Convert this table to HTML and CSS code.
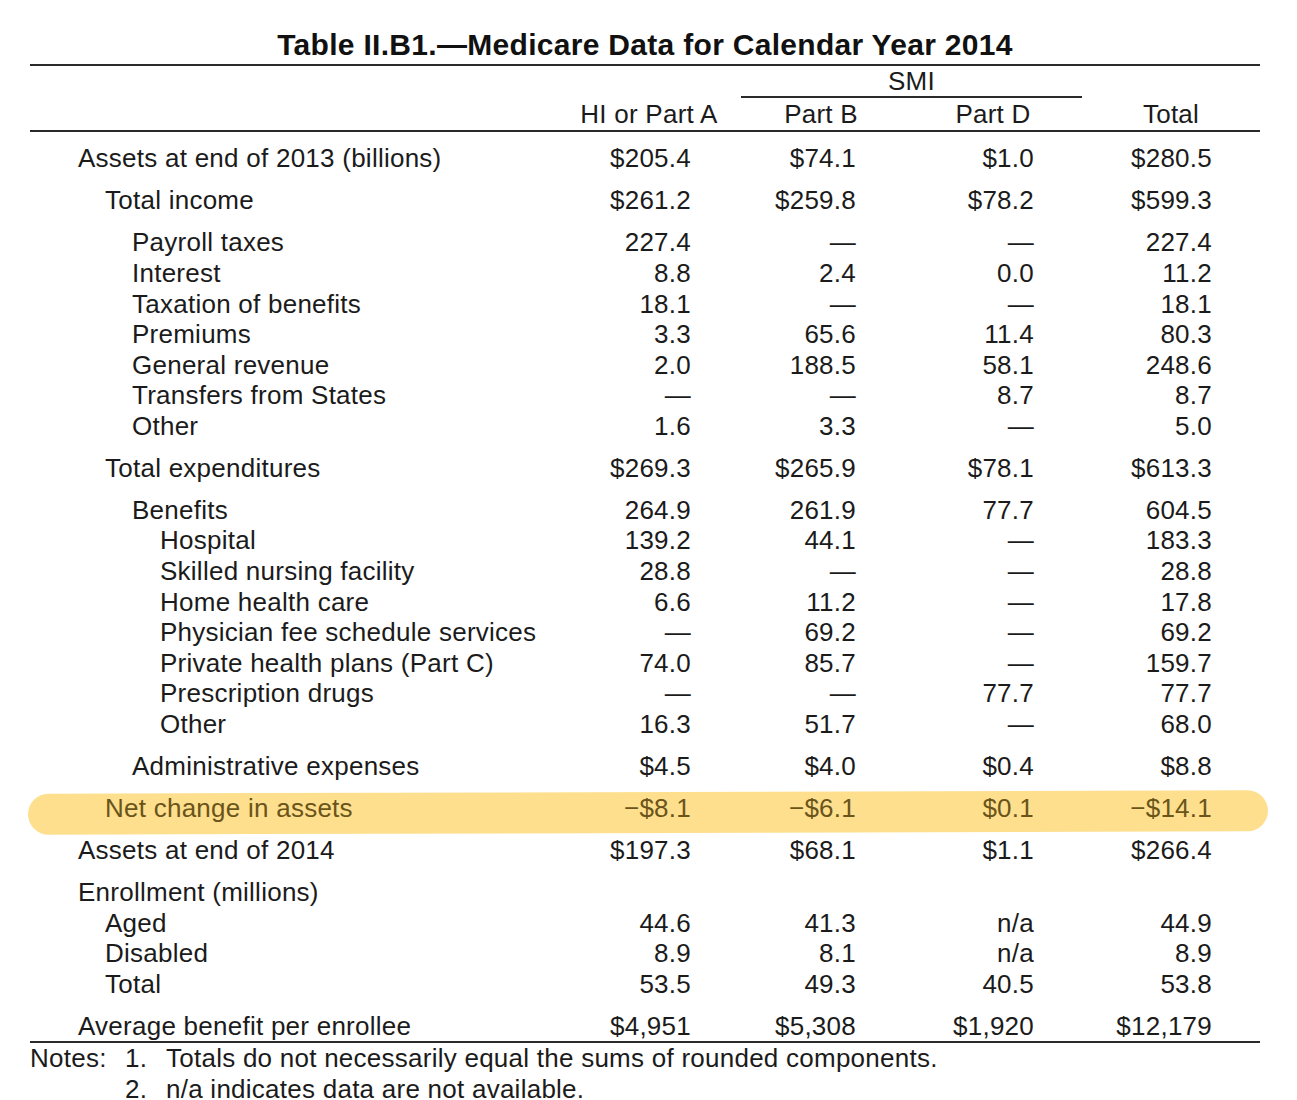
FILE: index.html
```html
<!DOCTYPE html>
<html lang="en">
<head>
<meta charset="utf-8">
<title>Table II.B1 — Medicare Data for Calendar Year 2014</title>
<link rel="stylesheet" href="styles.css">
</head>
<body>
<div class="page">
  <h1 class="title">Table II.B1.—Medicare Data for Calendar Year 2014</h1>
  <table class="data">
    <colgroup>
      <col class="w-label"><col class="w-hi"><col class="w-b"><col class="w-d"><col class="w-t">
    </colgroup>
    <thead>
      <tr class="smi-row">
        <th></th><th></th>
        <th colspan="2"><div class="smi">SMI</div></th>
        <th></th>
      </tr>
      <tr class="col-heads">
        <th></th>
        <th class="h-hi">HI or Part A</th>
        <th class="h-b">Part B</th>
        <th class="h-d">Part D</th>
        <th class="h-t">Total</th>
      </tr>
    </thead>
    <tbody>
      <tr class="gap"><td class="l0">Assets at end of 2013 (billions)</td><td class="n hi">$205.4</td><td class="n b">$74.1</td><td class="n d">$1.0</td><td class="n t">$280.5</td></tr>
      <tr class="gap"><td class="l1">Total income</td><td class="n hi">$261.2</td><td class="n b">$259.8</td><td class="n d">$78.2</td><td class="n t">$599.3</td></tr>
      <tr class="gap"><td class="l2">Payroll taxes</td><td class="n hi">227.4</td><td class="n b">—</td><td class="n d">—</td><td class="n t">227.4</td></tr>
      <tr><td class="l2">Interest</td><td class="n hi">8.8</td><td class="n b">2.4</td><td class="n d">0.0</td><td class="n t">11.2</td></tr>
      <tr><td class="l2">Taxation of benefits</td><td class="n hi">18.1</td><td class="n b">—</td><td class="n d">—</td><td class="n t">18.1</td></tr>
      <tr><td class="l2">Premiums</td><td class="n hi">3.3</td><td class="n b">65.6</td><td class="n d">11.4</td><td class="n t">80.3</td></tr>
      <tr><td class="l2">General revenue</td><td class="n hi">2.0</td><td class="n b">188.5</td><td class="n d">58.1</td><td class="n t">248.6</td></tr>
      <tr><td class="l2">Transfers from States</td><td class="n hi">—</td><td class="n b">—</td><td class="n d">8.7</td><td class="n t">8.7</td></tr>
      <tr><td class="l2">Other</td><td class="n hi">1.6</td><td class="n b">3.3</td><td class="n d">—</td><td class="n t">5.0</td></tr>
      <tr class="gap"><td class="l1">Total expenditures</td><td class="n hi">$269.3</td><td class="n b">$265.9</td><td class="n d">$78.1</td><td class="n t">$613.3</td></tr>
      <tr class="gap"><td class="l2">Benefits</td><td class="n hi">264.9</td><td class="n b">261.9</td><td class="n d">77.7</td><td class="n t">604.5</td></tr>
      <tr><td class="l3">Hospital</td><td class="n hi">139.2</td><td class="n b">44.1</td><td class="n d">—</td><td class="n t">183.3</td></tr>
      <tr><td class="l3">Skilled nursing facility</td><td class="n hi">28.8</td><td class="n b">—</td><td class="n d">—</td><td class="n t">28.8</td></tr>
      <tr><td class="l3">Home health care</td><td class="n hi">6.6</td><td class="n b">11.2</td><td class="n d">—</td><td class="n t">17.8</td></tr>
      <tr><td class="l3">Physician fee schedule services</td><td class="n hi">—</td><td class="n b">69.2</td><td class="n d">—</td><td class="n t">69.2</td></tr>
      <tr><td class="l3">Private health plans (Part C)</td><td class="n hi">74.0</td><td class="n b">85.7</td><td class="n d">—</td><td class="n t">159.7</td></tr>
      <tr><td class="l3">Prescription drugs</td><td class="n hi">—</td><td class="n b">—</td><td class="n d">77.7</td><td class="n t">77.7</td></tr>
      <tr><td class="l3">Other</td><td class="n hi">16.3</td><td class="n b">51.7</td><td class="n d">—</td><td class="n t">68.0</td></tr>
      <tr class="gap"><td class="l2">Administrative expenses</td><td class="n hi">$4.5</td><td class="n b">$4.0</td><td class="n d">$0.4</td><td class="n t">$8.8</td></tr>
      <tr class="gap marked"><td class="l1"><span class="marker"></span><span class="txt">Net change in assets</span></td><td class="n hi">−$8.1</td><td class="n b">−$6.1</td><td class="n d">$0.1</td><td class="n t">−$14.1</td></tr>
      <tr class="gap"><td class="l0">Assets at end of 2014</td><td class="n hi">$197.3</td><td class="n b">$68.1</td><td class="n d">$1.1</td><td class="n t">$266.4</td></tr>
      <tr class="gap"><td class="l0">Enrollment (millions)</td><td></td><td></td><td></td><td></td></tr>
      <tr><td class="l1">Aged</td><td class="n hi">44.6</td><td class="n b">41.3</td><td class="n d">n/a</td><td class="n t">44.9</td></tr>
      <tr><td class="l1">Disabled</td><td class="n hi">8.9</td><td class="n b">8.1</td><td class="n d">n/a</td><td class="n t">8.9</td></tr>
      <tr><td class="l1">Total</td><td class="n hi">53.5</td><td class="n b">49.3</td><td class="n d">40.5</td><td class="n t">53.8</td></tr>
      <tr class="gap last"><td class="l0">Average benefit per enrollee</td><td class="n hi">$4,951</td><td class="n b">$5,308</td><td class="n d">$1,920</td><td class="n t">$12,179</td></tr>
    </tbody>
  </table>
  <div class="notes">
    <span class="notes-label">Notes:</span>
    <span class="num">1.</span><span>Totals do not necessarily equal the sums of rounded components.</span>
    <span></span>
    <span class="num">2.</span><span>n/a indicates data are not available.</span>
  </div>
</div>
</body>
</html>
```

FILE: styles.css
```css
html {
  margin: 0;
  padding: 0;
  background: #ffffff;
}

body {
  margin: 0;
  padding: 0;
  font-family: "Liberation Sans", Arial, sans-serif;
  color: #1b1b1b;
  font-size: 26px;
  letter-spacing: 0.25px;
}

.page {
  width: 1230px;
  margin-left: 30px;
  padding-top: 27px;
}

.title {
  margin: 0;
  font-size: 30px;
  font-weight: bold;
  line-height: 36px;
  height: 37px;
  text-align: center;
  letter-spacing: 0.3px;
  color: #111;
}

.data {
  width: 1230px;
  border-collapse: collapse;
  table-layout: fixed;
  border-top: 2px solid #2a2a2a;
}

.w-label { width: 538px; }
.w-hi { width: 162px; }
.w-b { width: 182px; }
.w-d { width: 170px; }
.w-t { width: 178px; }

th, td {
  padding: 0;
  font-weight: normal;
  line-height: 30.6px;
  white-space: nowrap;
}

.smi-row th {
  height: 31px;
  line-height: 30px;
  vertical-align: top;
}

.smi {
  margin-left: 11px;
  border-bottom: 2px solid #2a2a2a;
  text-align: center;
  height: 30px;
}

.col-heads th {
  line-height: 30px;
  height: 32px;
  text-align: center;
  vertical-align: middle;
  border-bottom: 2px solid #2a2a2a;
}

.col-heads .h-d { padding-right: 8px; }

.gap td {
  padding-top: 11.4px;
}

.l0 { padding-left: 48px; }
.l1 { padding-left: 75px; }
.l2 { padding-left: 102px; }
.l3 { padding-left: 130px; }

.n { text-align: right; }
.n.hi { padding-right: 39px; }
.n.b { padding-right: 56px; }
.n.d { padding-right: 48px; }
.n.t { padding-right: 48px; }

.last td {
  border-bottom: 2px solid #2a2a2a;
}

.marked td {
  color: #6a5419;
}

.marked .l1 {
  position: relative;
}

.marker {
  position: absolute;
  left: -2px;
  top: 10px;
  width: 1240px;
  height: 41px;
  border-radius: 21px;
  background: #fddf8e;
  transform: rotate(-0.16deg);
  z-index: -1;
}

.marked .txt {
  position: relative;
}

.notes {
  display: grid;
  grid-template-columns: 95px 41px 1fr;
  line-height: 30.6px;
}
```
